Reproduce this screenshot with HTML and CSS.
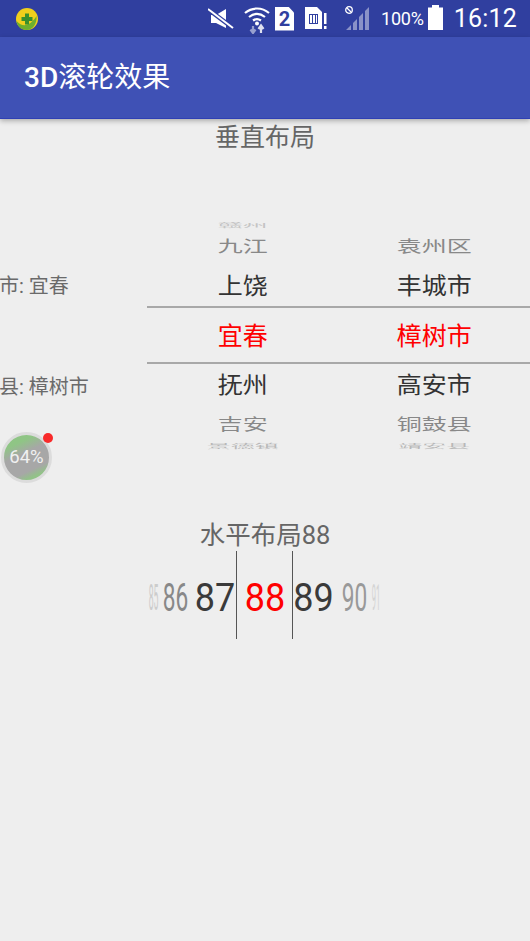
FILE: index.html
```html
<!DOCTYPE html>
<html lang="zh">
<head>
<meta charset="utf-8">
<title>3D滚轮效果</title>
<link rel="stylesheet" href="styles.css">
</head>
<body>
<header class="status">
  <svg class="logo" width="24" height="24" viewBox="0 0 24 24">
    <circle cx="12" cy="12" r="11" fill="#f0cf1c"/>
    <path d="M1.500 14c5 6 12 5 16 0 2-2 3-3 4-5 .8 7-3.500 14-9.500 14S2 19 1.500 14z" fill="#6cae2e"/>
    <path d="M10 6.500h4V10h3.500v4H14v3.500h-4V14H6.500v-4H10z" fill="#3a8f2c"/>
  </svg>
  <div class="status-icons">
    <svg class="i-mute" width="26" height="24" viewBox="0 0 26 24">
      <path d="M3 8h5l10-6v19L8 16H3z" fill="#fff"/>
      <path d="M1 3l24 18" stroke="#303f9f" stroke-width="4.500"/>
      <path d="M0 2l25 19" stroke="#fff" stroke-width="2"/>
    </svg>
    <svg class="i-wifi" width="26" height="27" viewBox="0 0 26 27">
      <path d="M1 6C8 0 18 0 25 6M5 10c5-4 11-4 16 0M9 13.500c3-2 5-2 8 0" fill="none" stroke="#fff" stroke-width="2.200"/>
      <circle cx="13" cy="16.500" r="2" fill="#fff"/>
      <path d="M9 19v6M6.500 22.500L9 26l2.500-3.500" fill="none" stroke="#98a0cf" stroke-width="2.200"/>
      <path d="M17 26v-7M14.500 22l2.500-3.500 2.500 3.500" fill="none" stroke="#dfe1f0" stroke-width="2.200"/>
    </svg>
    <span class="sim2">2</span>
    <svg class="i-sim" width="22" height="24" viewBox="0 0 22 24">
      <path d="M0 1h12l5 5v17H0z" fill="#fff"/>
      <path d="M4 8h9v10H4z" fill="#303f9f"/>
      <path d="M5 9h2v8H5zM8 9h2v8H8zM11 9h1v8h-1z" fill="#fff"/>
      <path d="M19 7h2.500v11H19zM19 20h2.500v3H19z" fill="#fff"/>
    </svg>
    <svg class="i-signal" width="26" height="25" viewBox="0 0 26 25">
      <circle cx="5" cy="4" r="3.300" fill="none" stroke="#fff" stroke-width="1.300"/>
      <path d="M3 2l4 4" stroke="#fff" stroke-width="1.300"/>
      <path d="M2 24l5-5v5zM9 24v-7l4-4v11zM15 24V11l4-4v17zM21 24V5l4-4v23z" fill="#8a92c8"/>
    </svg>
    <span class="batt-text">100%</span>
    <svg class="i-batt" width="15" height="25" viewBox="0 0 15 25">
      <path d="M4 0h7v2.500h4V25H0V2.500h4z" fill="#fff"/>
    </svg>
    <span class="clock">16:12</span>
  </div>
</header>
<div class="appbar"><span class="appbar-latin">3D</span>滚轮效果</div>
<main class="content">
  <h2 class="title title-v">垂直布局</h2>
  <section class="vertical">
    <div class="labels">
      <div class="label label-city">市: 宜春</div>
      <div class="label label-county">县: 樟树市</div>
    </div>
    <div class="wheel">
      <div class="band"></div>
      <div class="col">
        <div class="cell r1"><span>赣州</span></div>
        <div class="cell r2"><span>九江</span></div>
        <div class="cell r3"><span>上饶</span></div>
        <div class="cell r4"><span>宜春</span></div>
        <div class="cell r5"><span>抚州</span></div>
        <div class="cell r6"><span>吉安</span></div>
        <div class="cell r7"><span>景德镇</span></div>
      </div>
      <div class="col">
        <div class="cell r1"></div>
        <div class="cell r2"><span>袁州区</span></div>
        <div class="cell r3"><span>丰城市</span></div>
        <div class="cell r4"><span>樟树市</span></div>
        <div class="cell r5"><span>高安市</span></div>
        <div class="cell r6"><span>铜鼓县</span></div>
        <div class="cell r7"><span>靖安县</span></div>
      </div>
    </div>
  </section>
  <h2 class="title title-h">水平布局88</h2>
  <section class="horizontal">
    <span class="num n85">85</span>
    <span class="num n86">86</span>
    <span class="num n87">87</span>
    <span class="num n88"><span class="n88-text">88</span></span>
    <span class="num n89">89</span>
    <span class="num n90">90</span>
    <span class="num n91">91</span>
  </section>
</main>
<div class="float">
  <div class="ball">64%</div>
  <i class="dot"></i>
</div>
</body>
</html>
```
FILE: styles.css
```css
* { box-sizing: border-box; }
html, body { margin: 0; padding: 0; }
body {
  width: 530px;
  height: 941px;
  overflow: hidden;
  background: #eeeeee;
  font-family: Roboto, "Noto Sans CJK SC", sans-serif;
  position: relative;
}
.status {
  height: 37px;
  background: #303f9f;
  display: flex;
  align-items: center;
  padding: 0 13px 0 15px;
  color: #fff;
}
.status-icons { margin-left: auto; display: flex; align-items: center; height: 37px; }
.logo { flex: none; }
.i-mute { margin-right: 10px; margin-top: 1px; }
.i-wifi { margin-right: 5px; margin-top: 4px; }
.sim2 {
  width: 19px;
  height: 24px;
  background: #fff;
  color: #303f9f;
  font-weight: 700;
  font-size: 20px;
  line-height: 24px;
  text-align: center;
  margin-right: 11px;
  clip-path: polygon(0 0, 70% 0, 100% 25%, 100% 100%, 0 100%);
}
.i-sim { margin-right: 17px; margin-top: -1px; }
.i-signal { margin-right: 11px; }
.batt-text { font-size: 18px; margin-right: 4px; letter-spacing: -0.2px; }
.i-batt { margin-right: 11px; margin-top: -2px; }
.clock { font-size: 25px; letter-spacing: 0.2px; }

.appbar {
  height: 82px;
  background: #3f51b5;
  color: #fff;
  font-size: 28px;
  font-weight: 400;
  line-height: 82px;
  padding-left: 24px;
  border-bottom: 1px solid #2f40b4;
  box-shadow: 0 2px 5px rgba(0,0,0,.28);
  position: relative;
}
.appbar-latin { font-weight: 500; }
.content { display: flex; flex-direction: column; }
.title {
  margin: 0;
  font-weight: 400;
  font-size: 25.500px;
  line-height: 36px;
  height: 36px;
  color: #666;
  text-align: center;
}
.title-v { padding-top: 1px; font-size: 25px; }
.title-h { margin-top: 63px; }

.vertical { display: flex; margin-top: 62px; height: 237px; }
.labels { width: 147px; display: flex; flex-direction: column; padding-top: 55px; }
.label { font-size: 20px; line-height: 28px; color: #6a6a6a; white-space: nowrap; margin-left: -1px; }
.label-county { margin-top: 73px; }
.wheel { position: relative; display: flex; flex: 1; }
.band {
  position: absolute;
  left: 0; right: 0;
  top: 89px;
  height: 58px;
  border-top: 2px solid #a8a8a8;
  border-bottom: 2px solid #a8a8a8;
}
.col { flex: 1; display: flex; flex-direction: column; }
.cell { display: flex; justify-content: center; align-items: center; font-size: 25px; color: #333; white-space: nowrap; }
.cell span { display: block; line-height: 1; }
.r1 { height: 8px; margin-top: 4px; }
.r1 span { transform: scaleY(.22); color: #c4c4c4; }
.r2 { height: 36px; margin-top: -1px; }
.r2 span { transform: scaleY(.62); color: #888; }
.r3 { height: 44px; margin-top: 0; }
.r3 span { transform: scaleY(.92); }
.r4 { height: 56px; margin-top: 0; }
.r4 span { color: #f00; }
.r5 { height: 44px; margin-top: -1px; }
.r5 span { transform: scaleY(.92); }
.r6 { height: 36px; margin-top: -1px; }
.r6 span { transform: scaleY(.62); color: #888; }
.r7 { height: 8px; margin-top: 0; }
.r7 span { transform: scaleY(.22); font-size: 24px; color: #b8b8b8; }

.horizontal {
  margin: -2px 0 0 147px;
  width: 233px;
  height: 88px;
  display: flex;
  font-size: 36px;
}
.num {
  display: flex;
  justify-content: center;
  line-height: 88px;
  padding-top: 3px;
  flex: none;
  color: #3a3a3a;
}
.n85 { width: 13px; transform: scaleX(.24); color: #ccc; }
.n86 { width: 31px; transform: scale(.63, 1.08); color: #888; }
.n87 { width: 42px; margin-left: 3px; transform: scaleY(1.08); }
.n88 {
  width: 57px;
  padding-left: 1px;
  color: #f00;
  border-left: 1px solid #555;
  border-right: 1px solid #555;
}
.n88-text { display: block; transform: scaleY(1.08); }
.n89 { width: 41px; transform: scaleY(1.08); }
.n90 { width: 29px; margin-left: 6px; transform: scale(.63, 1.08); color: #999; }
.n91 { width: 14px; transform: scaleX(.21); color: #d4d4d4; }

.float { position: absolute; left: 1px; top: 432px; width: 56px; height: 52px; }
.ball {
  width: 51px;
  height: 51px;
  border-radius: 50%;
  border: 3px solid #dcdcdc;
  background:
    linear-gradient(155deg, #8fc585 0 22%, #a7a7a7 42% 72%, #92c288 84%);
  color: #f0f0f0;
  font-size: 18.500px;
  line-height: 45px;
  text-align: center;
}
.dot {
  position: absolute;
  left: 42px;
  top: 1px;
  width: 10px;
  height: 10px;
  border-radius: 50%;
  background: #f82a2a;
}
```
